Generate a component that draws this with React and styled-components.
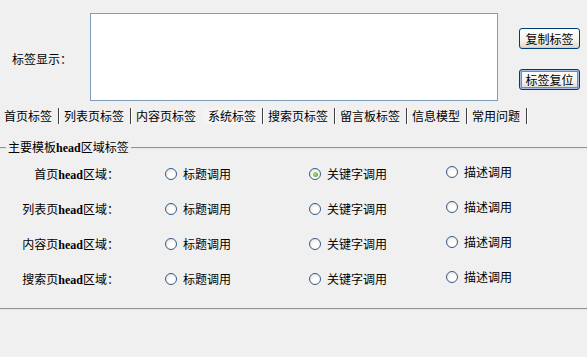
import React from 'react';
import styled, { createGlobalStyle } from 'styled-components';

const Global = createGlobalStyle`
    html, body {
        margin: 0;
        padding: 0;
        background: #f0f0f0;
    }
    body {
        font-family: "Noto Sans CJK SC", "Liberation Sans", sans-serif;
        font-size: 12px;
        color: #000;
    }
`;

const Page = styled.div`
    width: 587px;
    height: 357px;
    overflow: hidden;
    background: #f0f0f0;
`;

const TopRow = styled.div`
    display: flex;
    padding-top: 13px;
    margin-bottom: 4px;
`;

const ShowLabel = styled.div`
    width: 78px;
    padding-left: 12px;
    padding-top: 4px;
    display: flex;
    align-items: center;
    line-height: 16px;
`;

const TagBox = styled.textarea`
    box-sizing: border-box;
    width: 408px;
    height: 88px;
    margin: 0;
    border: 1px solid #7f9db9;
    background: #fff;
    resize: none;
    outline: none;
`;

const ButtonCol = styled.div`
    display: flex;
    flex-direction: column;
    gap: 20px;
    margin-left: 21px;
    padding-top: 15px;
`;

const Button = styled.button`
    box-sizing: border-box;
    width: 61px;
    height: 21px;
    padding: 0;
    font-family: "Noto Sans CJK SC", sans-serif;
    font-size: 12px;
    line-height: 17px;
    color: #000;
    border: 1px solid #003c74;
    border-radius: 3px;
    background: linear-gradient(#ffffff, #f4f3ee 60%, #dcd9cc);
    box-shadow: ${p => p.focused
        ? 'inset 0 0 0 1px #a7bfe8, inset 0 0 0 2px #6b87c8'
        : 'inset 0 -1px 0 #d6d0c0'};
`;

const TabBar = styled.div`
    display: flex;
    height: 22px;
    align-items: center;
    padding-left: 4px;
`;

const Tab = styled.div`
    padding: 0 6px 0 ${p => (p.first ? 0 : 5)}px;
    line-height: 16px;
    border-right: ${p => (p.plain ? '1px solid transparent' : '1px solid #404040')};
    box-shadow: ${p => (p.plain ? 'none' : '1px 0 0 #ffffff')};
    height: 16px;
    background: ${p => (p.active ? '#f4f4f4' : 'transparent')};
`;

const Group = styled.fieldset`
    margin: 12px 0 0 0;
    padding: 5px 0 7px 6px;
    border: none;
    border-top: 2px groove #e6e6e6;
    border-bottom: 2px groove #e6e6e6;
`;

const Legend = styled.legend`
    padding: 0 2px;
    line-height: 16px;
`;

const Row = styled.div`
    display: grid;
    grid-template-columns: 159px 144px 137px 1fr;
    height: 35px;
    align-items: center;
`;

const RowLabel = styled.div`
    text-align: right;
    padding-right: 46px;
    line-height: 16px;
`;

const Latin = styled.span`
    font-family: "Liberation Serif", serif;
    font-size: 12px;
    font-weight: bold;
`;

const Choice = styled.label`
    display: flex;
    align-items: center;
    gap: 6px;
    line-height: 16px;
    margin-top: ${p => (p.lift ? '-4px' : '0')};
`;

const Dot = styled.span`
    box-sizing: border-box;
    width: 12px;
    height: 12px;
    border-radius: 50%;
    border: 1px solid #3a5a80;
    background: radial-gradient(circle at 60% 65%, #ffffff 30%, #dcdcd6 100%);
    display: flex;
    align-items: center;
    justify-content: center;

    &::after {
        content: '';
        width: 5px;
        height: 5px;
        border-radius: 50%;
        background: ${p => (p.checked ? 'radial-gradient(circle at 40% 40%, #a8e38a, #3f9a1e)' : 'transparent')};
    }
`;

const tabs = ['首页标签', '列表页标签', '内容页标签', '系统标签', '搜索页标签', '留言板标签', '信息模型', '常用问题'];

const rows = [
    { name: '首页', pick: 1 },
    { name: '列表页', pick: -1 },
    { name: '内容页', pick: -1 },
    { name: '搜索页', pick: -1 },
];

const options = ['标题调用', '关键字调用', '描述调用'];

const App = () => {
    return (
        <Page>
            <Global />
            <TopRow>
                <ShowLabel>标签显示：</ShowLabel>
                <TagBox />
                <ButtonCol>
                    <Button>复制标签</Button>
                    <Button focused>标签复位</Button>
                </ButtonCol>
            </TopRow>

            <TabBar>
                {tabs.map((t, i) => (
                    <Tab key={t} first={i === 0} plain={i === 2} active={i === 3}>{t}</Tab>
                ))}
            </TabBar>

            <Group>
                <Legend>主要模板<Latin>head</Latin>区域标签</Legend>
                {rows.map(r => (
                    <Row key={r.name}>
                        <RowLabel>{r.name}<Latin>head</Latin>区域：</RowLabel>
                        {options.map((o, i) => (
                            <Choice key={o} lift={i === 2}>
                                <Dot checked={r.pick === i} />
                                {o}
                            </Choice>
                        ))}
                        <div />
                    </Row>
                ))}
            </Group>
        </Page>
    );
};

export default App;
